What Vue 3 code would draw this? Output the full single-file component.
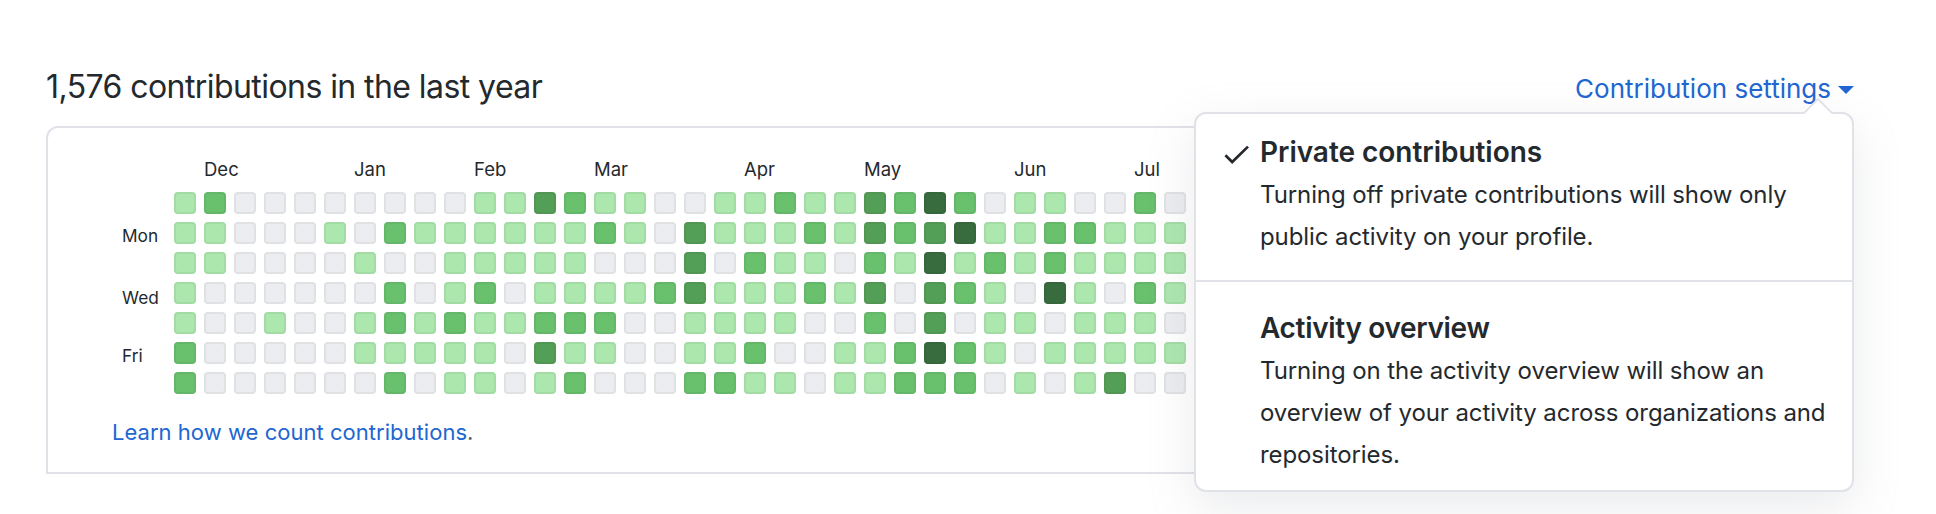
<script setup>
const months = [
  { name: 'Dec', col: 2 }, { name: 'Jan', col: 7 }, { name: 'Feb', col: 11 }, { name: 'Mar', col: 15 },
  { name: 'Apr', col: 20 }, { name: 'May', col: 24 }, { name: 'Jun', col: 29 }, { name: 'Jul', col: 33 },
]
const days = ['', 'Mon', '', 'Wed', '', 'Fri', '']

// One string per weekday, one digit (contribution level 0-4) per week.
const rows = [
  '1200000' + '0001132110' + '011211324' + '20110020',
  '1100010' + '2111111210' + '311121323' + '41122111',
  '1100001' + '0011111000' + '302110214' + '12121111',
  '1000000' + '2012011112' + '311121303' + '21041021',
  '1001001' + '2121122200' + '111100203' + '01101110',
  '2000001' + '1111031100' + '112001124' + '21011111',
  '2000000' + '2011012000' + '221101122' + '20101300',
]
</script>

<template>
  <main class="page">
    <header class="head">
      <h2 class="title">1,576 contributions in the last year</h2>
      <a class="settings">Contribution settings<span class="caret"></span></a>
    </header>

    <section class="card">
      <div class="months">
        <span v-for="m in months" :key="m.name" :style="{ gridColumnStart: m.col }">{{ m.name }}</span>
      </div>
      <div class="graph">
        <div class="days">
          <span v-for="(d, i) in days" :key="i" :class="d.toLowerCase()">{{ d }}</span>
        </div>
        <div class="cells">
          <template v-for="(row, r) in rows" :key="r">
            <i v-for="(level, c) in row" :key="c" class="cell" :class="'l' + level"></i>
          </template>
        </div>
      </div>
      <p class="learn"><a>Learn how we count contributions</a>.</p>
    </section>

    <div class="menu">
      <svg class="notch" width="28" height="16" viewBox="0 0 28 16">
        <path d="M0 16 14 2 28 16Z" fill="#fff" />
        <path d="M0 15 14 1 28 15" fill="none" stroke="#e1e2e8" stroke-width="1.8" />
      </svg>
      <div class="item first">
        <svg class="check" width="26" height="20" viewBox="0 0 26 20">
          <path d="M1.4 10.2 8.2 17 24 1.6" fill="none" stroke="#24292e" stroke-width="2.7" />
        </svg>
        <h3>Private contributions</h3>
        <p>Turning off private contributions will show only<br>public activity on your profile.</p>
      </div>
      <div class="item second">
        <h3>Activity overview</h3>
        <p>Turning on the activity overview will show an<br>overview of your activity across organizations and<br>repositories.</p>
      </div>
    </div>
  </main>
</template>

<style>
body { background: #fff; overflow: hidden; }
</style>

<style scoped>
.page {
  position: relative;
  box-sizing: border-box;
  width: 1936px;
  height: 514px;
  padding: 63px 82px 0 46px;
  overflow: hidden;
  font-family: Inter, "Liberation Sans", sans-serif;
  color: #24292e;
}
h2, h3, p { margin: 0; }
.head {
  display: flex;
  align-items: flex-start;
  justify-content: space-between;
  height: 48px;
  margin-bottom: 15px;
  line-height: 48px;
  white-space: nowrap;
}
.title { font-size: 32px; font-weight: 400; letter-spacing: -0.57px; }
.settings {
  display: flex;
  align-items: center;
  height: 48px;
  margin-top: 2px;
  font-size: 26px;
  color: #2166d1;
}
.caret {
  width: 0;
  margin: 2px 0 0 7px;
  border: 8px solid transparent;
  border-top-color: #2166d1;
  border-bottom: 0;
}
.card {
  box-sizing: border-box;
  height: 348px;
  padding: 29px 0 0 64px;
  border: 2px solid #e1e2e8;
  border-radius: 12px 12px 0 0;
}
.months {
  display: grid;
  grid-template-columns: repeat(34, 30px);
  height: 24px;
  margin: 0 0 11px 62px;
  font-size: 18.5px;
  line-height: 24px;
}
.months span { width: 30px; white-space: nowrap; }
.graph { display: flex; height: 202px; }
.days {
  display: grid;
  grid-template-rows: repeat(7, 30px);
  width: 52px;
  margin-left: 10px;
  font-size: 17.3px;
  line-height: 28px;
}
.wed { padding-top: 2px; }
.cells {
  display: grid;
  grid-template-columns: repeat(34, 22px);
  grid-auto-rows: 22px;
  gap: 8px;
}
.cell {
  border-radius: 4px;
  box-shadow: inset 0 0 0 2px rgba(27, 31, 35, 0.06);
}
.l0 { background: #ebedf0; }
.l1 { background: #ace7ae; }
.l2 { background: #69c16e; }
.l3 { background: #549f57; }
.l4 { background: #386c3e; }
.learn {
  margin-top: 22px;
  font-size: 22px;
  line-height: 32px;
  letter-spacing: 0.03px;
  color: #586069;
}
.learn a { color: #2166d1; }
.menu {
  position: absolute;
  top: 112px;
  left: 1194px;
  box-sizing: border-box;
  width: 660px;
  height: 380px;
  border: 2px solid #e1e2e8;
  border-radius: 12px;
  background: #fff;
  box-shadow: 0 16px 48px rgba(149, 157, 165, 0.2);
}
.notch { position: absolute; top: -16px; right: 20px; }
.item {
  position: relative;
  box-sizing: border-box;
  padding-left: 64px;
  white-space: nowrap;
}
.first { height: 168px; padding-top: 16px; border-bottom: 2px solid #e1e2e8; }
.second { padding-top: 24px; }
.check { position: absolute; top: 31px; left: 28px; }
h3 { font-size: 28px; font-weight: 600; line-height: 44px; letter-spacing: -0.03px; }
.second h3 { letter-spacing: -0.33px; }
.item p { font-size: 24px; line-height: 42px; letter-spacing: -0.09px; }
</style>
